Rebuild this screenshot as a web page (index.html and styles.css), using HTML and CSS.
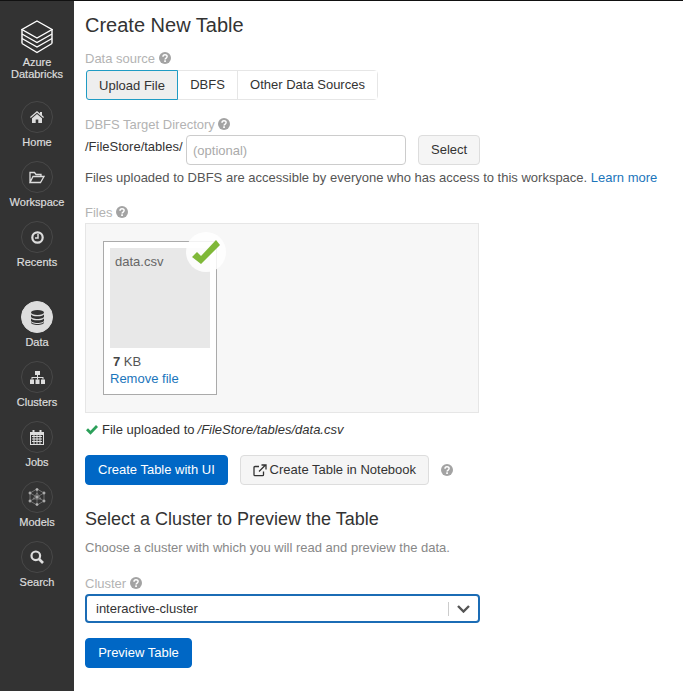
FILE: index.html
```html
<!DOCTYPE html>
<html lang="en">
<head>
  <meta charset="UTF-8">
  <title>Create New Table</title>
  <link rel="stylesheet" href="styles.css">
</head>
<body>
  <svg class="defs" width="0" height="0">
    <symbol id="help" viewBox="0 0 12 12">
      <circle cx="6" cy="6" r="6" fill="currentColor"/>
      <path d="M4 4.700c0-2.600 4.100-2.600 4.100-.1 0 1.500-2 1.400-2 3" fill="none" stroke="#fff" stroke-width="1.500"/>
      <rect x="5.200" y="8.300" width="1.700" height="1.700" fill="#fff"/>
    </symbol>
  </svg>

  <!-- sidebar -->
  <nav class="sidebar">
    <a class="brand">
      <svg width="32" height="34" viewBox="0 0 32 34" fill="none" stroke="#fff" stroke-width="1.400">
        <path d="M16 1 31 9.500 16 18 1 9.500Z"/>
        <path d="M1 14 16 22.500 31 14"/>
        <path d="M1 18.500 16 27 31 18.500"/>
        <path d="M1 23.500 16 32.500 31 23.500"/>
        <path d="M1 9.500V23.500M31 9.500V23.500"/>
      </svg>
      <span>Azure<br>Databricks</span>
    </a>

    <a class="nav-item">
      <span class="nav-icon">
        <svg width="14" height="12" viewBox="0 0 14 12" fill="#ddd"><path d="M7 0 0 6l.8.9L7 1.700l6.200 5.200.8-.9-2-1.700V1h-2v1.600ZM2 7.300V12h3.700V8.500h2.600V12H12V7.300L7 3.100Z"/></svg>
      </span>
      Home
    </a>
    <a class="nav-item">
      <span class="nav-icon">
        <svg width="16" height="13" viewBox="0 0 16 13" fill="none" stroke="#ddd" stroke-width="1.300"><path d="M1 11.500V1.500h4.500l1.500 2h5v2M1 11.500h10.500L15 5.500H4Z"/></svg>
      </span>
      Workspace
    </a>
    <a class="nav-item">
      <span class="nav-icon">
        <svg width="13" height="13" viewBox="0 0 13 13" fill="none" stroke="#ddd"><circle cx="6.500" cy="6.500" r="5.200" stroke-width="2.200"/><path d="M7 3v4H4" stroke-width="1.500"/></svg>
      </span>
      Recents
    </a>

    <a class="nav-item nav-item-active nav-gap">
      <span class="nav-icon">
        <svg width="13" height="15" viewBox="0 0 13 15" fill="#333"><ellipse cx="6.500" cy="2.500" rx="6.500" ry="2.500"/><path d="M0 4v2.500C0 7.900 2.900 9 6.500 9S13 7.900 13 6.500V4C13 5.400 10.100 6.300 6.500 6.300S0 5.400 0 4ZM0 8v2.500C0 11.900 2.900 13 6.500 13S13 11.900 13 10.500V8C13 9.400 10.100 10.300 6.500 10.300S0 9.400 0 8Z"/><path d="M0 11.500v1C0 13.900 2.900 15 6.500 15S13 13.900 13 12.500v-1C13 12.900 10.100 14 6.500 14S0 12.900 0 11.500Z"/></svg>
      </span>
      Data
    </a>
    <a class="nav-item">
      <span class="nav-icon">
        <svg width="15" height="13" viewBox="0 0 15 13" fill="#ddd"><rect x="5" y="0" width="5" height="4"/><rect x="0" y="8.500" width="4" height="4.500"/><rect x="5.500" y="8.500" width="4" height="4.500"/><rect x="11" y="8.500" width="4" height="4.500"/><path d="M7 4h1v2h5.500v2.500h-1V7H8v1.500H7V7H2.500v1.500h-1V6H7Z"/></svg>
      </span>
      Clusters
    </a>
    <a class="nav-item">
      <span class="nav-icon">
        <svg width="14" height="15" viewBox="0 0 14 15" fill="#ddd"><path d="M0 2h2.500V0h2v2h5V0h2v2H14v13H0ZM1 5v9h12V5Z"/><path d="M2 6h10v1H2ZM2 8.500h10v1H2ZM2 11h10v1H2Z"/><path d="M3.500 5h1v9h-1ZM6.500 5h1v9h-1ZM9.500 5h1v9h-1Z"/></svg>
      </span>
      Jobs
    </a>
    <a class="nav-item">
      <span class="nav-icon">
        <svg width="18" height="18" viewBox="0 0 18 18" fill="#bbb" stroke="#999" stroke-width=".6"><path d="M9 1 16 5v8L9 17 2 13V5ZM9 1v16M2 5l14 8M16 5 2 13M9 5l4 6H5Z" fill="none"/><circle cx="9" cy="1.500" r="1.200"/><circle cx="16" cy="5" r="1.200"/><circle cx="16" cy="13" r="1.200"/><circle cx="9" cy="16.500" r="1.200"/><circle cx="2" cy="13" r="1.200"/><circle cx="2" cy="5" r="1.200"/><circle cx="9" cy="9" r="1.300"/></svg>
      </span>
      Models
    </a>
    <a class="nav-item">
      <span class="nav-icon">
        <svg width="14" height="14" viewBox="0 0 14 14" fill="none" stroke="#ddd"><circle cx="5.800" cy="5.800" r="4.300" stroke-width="2.200"/><path d="M9 9l4 4" stroke-width="2.600"/></svg>
      </span>
      Search
    </a>
  </nav>

  <main class="content">
    <h1>Create New Table</h1>

    <label class="field-label label-source">Data source <svg class="help"><use href="#help"/></svg></label>
    <div class="tabs">
      <button class="tab tab-active">Upload File</button>
      <button class="tab tab-dbfs">DBFS</button>
      <button class="tab">Other Data Sources</button>
    </div>

    <label class="field-label label-target">DBFS Target Directory <svg class="help"><use href="#help"/></svg></label>
    <div class="target-row">
      <span class="target-prefix">/FileStore/tables/</span>
      <input class="target-input" type="text" placeholder="(optional)">
      <button class="btn">Select</button>
    </div>
    <p class="note">Files uploaded to DBFS are accessible by everyone who has access to this workspace. <a href="#">Learn more</a></p>

    <label class="field-label label-files">Files <svg class="help"><use href="#help"/></svg></label>
    <div class="dropzone">
      <div class="file-card">
        <div class="file-thumb">data.csv</div>
        <div class="file-size"><strong>7</strong> KB</div>
        <a class="file-remove" href="#">Remove file</a>
        <span class="file-badge">
          <svg width="28" height="24" viewBox="0 0 28 24"><path d="M0 17 5 12 9 16 24 0 28 5 9 24Z" fill="#7fb838"/></svg>
        </span>
      </div>
    </div>
    <p class="upload-status">
      <svg width="12" height="10" viewBox="0 0 12 10"><path d="M0 5.300 2 3.300 4.500 5.800 10 0 12 2 4.500 9.700Z" fill="#2ca05a"/></svg>
      File uploaded to <em>/FileStore/tables/data.csv</em>
    </p>

    <div class="action-row">
      <button class="btn btn-primary">Create Table with UI</button>
      <button class="btn btn-notebook">
        <svg width="14" height="13" viewBox="0 0 14 13" fill="none" stroke="#333" stroke-width="1.300"><path d="M10.500 7.500v3.200a1 1 0 0 1-1 1H2a1 1 0 0 1-1-1V3.500a1 1 0 0 1 1-1h4"/><path d="M6 7.500 12 1.500M8.500 1H13v4.500"/></svg>
        Create Table in Notebook
      </button>
      <svg class="help help-action"><use href="#help"/></svg>
    </div>

    <h2>Select a Cluster to Preview the Table</h2>
    <p class="hint">Choose a cluster with which you will read and preview the data.</p>

    <label class="field-label label-cluster">Cluster <svg class="help"><use href="#help"/></svg></label>
    <div class="cluster-select">
      <span class="cluster-value">interactive-cluster</span>
      <span class="cluster-sep"></span>
      <svg width="13" height="8" viewBox="0 0 13 8" fill="none" stroke="#555" stroke-width="2.400"><path d="M1 1l5.500 5.500L12 1"/></svg>
    </div>

    <button class="btn btn-primary btn-preview">Preview Table</button>
  </main>
</body>
</html>
```

FILE: styles.css
```css
* {
  box-sizing: border-box;
}
html, body {
  height: 100%;
}
body {
  margin: 0;
  display: flex;
  overflow: hidden;
  border-top: 1px solid #111;
  font-family: "Liberation Sans", Arial, sans-serif;
  font-size: 13px;
  line-height: 18px;
  color: #333;
  background: #fff;
}
a {
  color: #1b75bb;
  text-decoration: none;
}
.defs {
  position: absolute;
}

/* sidebar */
.sidebar {
  flex: 0 0 74px;
  padding-top: 19px;
  background: #333;
  color: #ddd;
  font-size: 11px;
  line-height: 12px;
  text-align: center;
  -webkit-text-stroke: 0.2px #ddd;
}
.brand {
  display: flex;
  flex-direction: column;
  align-items: center;
  gap: 2px;
  height: 81px;
  color: #ddd;
}
.nav-item {
  display: flex;
  flex-direction: column;
  align-items: center;
  gap: 3px;
  height: 60px;
  color: #ddd;
}
.nav-gap {
  margin-top: 20px;
}
.nav-icon {
  display: flex;
  align-items: center;
  justify-content: center;
  width: 32px;
  height: 32px;
  border: 1px solid #484848;
  border-radius: 50%;
}
.nav-item-active .nav-icon {
  background: #ddd;
  border-color: #ddd;
}

/* main */
.content {
  flex: 1;
  min-width: 0;
  padding-left: 11px;
}
h1 {
  margin: 12px 0 0;
  font-size: 20px;
  line-height: 24px;
  font-weight: 400;
}
h2 {
  margin: 23px 0 0;
  font-size: 18px;
  line-height: 22px;
  font-weight: 400;
}
.field-label {
  display: block;
  color: #b3b3b3;
  line-height: 16px;
}
.help {
  width: 12px;
  height: 12px;
  color: #a3a3a3;
  vertical-align: -1px;
}
.label-source {
  margin-top: 14px;
}
.label-target {
  margin-top: 17px;
}
.label-files {
  margin-top: 18px;
}
.label-cluster {
  margin-top: 19px;
}

.tabs {
  display: flex;
  width: 292px;
  height: 30px;
  margin: 3px 0 0 1px;
  border: 1px solid #e6e6e6;
  border-radius: 4px;
}
.tab {
  padding: 0;
  border: 0;
  border-right: 1px solid #e6e6e6;
  background: #fff;
  font: inherit;
  color: #333;
  white-space: nowrap;
}
.tab:last-child {
  flex: 1;
  border-right: 0;
}
.tab-active {
  width: 92px;
  margin: -1px 0 -1px -1px;
  border: 1px solid #1f9bc4;
  border-radius: 3px 0 0 3px;
  background: #eee;
  padding-top: 2px;
}
.tab-dbfs {
  width: 60px;
}

.target-row {
  display: flex;
  align-items: flex-start;
  margin-top: 2px;
}
.target-prefix {
  width: 101px;
  padding-top: 3px;
}
.target-input {
  width: 220px;
  height: 30px;
  padding: 0 6px;
  border: 1px solid #ccc;
  border-radius: 4px;
  font: inherit;
}
.target-input::placeholder {
  color: #aaa;
  opacity: 1;
}
.btn {
  height: 30px;
  padding: 0 12px;
  border: 1px solid #ddd;
  border-radius: 4px;
  background: #f5f5f5;
  font: inherit;
  color: #333;
}
.target-row .btn {
  margin-left: 12px;
  width: 62px;
}
.note {
  margin: 4px 0 0;
  white-space: nowrap;
  color: #555;
}
.dropzone {
  width: 394px;
  height: 190px;
  margin-top: 2px;
  padding: 17px 17px 0;
  background: #f7f7f7;
  border: 1px solid #e6e6e6;
}
.file-card {
  position: relative;
  width: 114px;
  height: 154px;
  padding: 6px;
  background: #fff;
  border: 1px solid #aaa;
}
.file-thumb {
  width: 100px;
  height: 100px;
  padding: 5px;
  background: #e8e8e8;
  color: #666;
}
.file-size {
  margin: 5px 0 -1px 3px;
  color: #555;
}
.file-size strong {
  color: #444;
}
.file-remove {
  display: block;
}
.file-badge {
  position: absolute;
  top: -10px;
  right: -10px;
  display: flex;
  align-items: center;
  justify-content: center;
  width: 40px;
  height: 40px;
  border-radius: 50%;
  background: rgba(255, 255, 255, 0.85);
}
.upload-status {
  margin: 8px 0 0 1px;
  display: flex;
  align-items: center;
  gap: 4px;
}
.upload-status em {
  margin-left: -1px;
}
.action-row {
  display: flex;
  align-items: center;
  margin-top: 16px;
}
.btn-primary {
  background: #0067c5;
  border-color: #0067c5;
  color: #fff;
}
.btn-notebook {
  display: flex;
  align-items: center;
  justify-content: center;
  gap: 3px;
  width: 189px;
  margin-left: 12px;
  padding: 0;
  white-space: nowrap;
}
.help-action {
  margin-left: 12px;
}
.hint {
  margin: 9px 0 0;
  color: #888;
}
.cluster-select {
  display: flex;
  align-items: center;
  width: 395px;
  height: 29px;
  margin-top: 2px;
  padding: 0 8px 0 9px;
  border: 2px solid #1b6cb5;
  border-radius: 4px;
}
.cluster-value {
  flex: 1;
}
.cluster-sep {
  width: 1px;
  height: 14px;
  margin-right: 8px;
  background: #ccc;
}
.btn-preview {
  display: block;
  width: 107px;
  margin-top: 15px;
}
```
